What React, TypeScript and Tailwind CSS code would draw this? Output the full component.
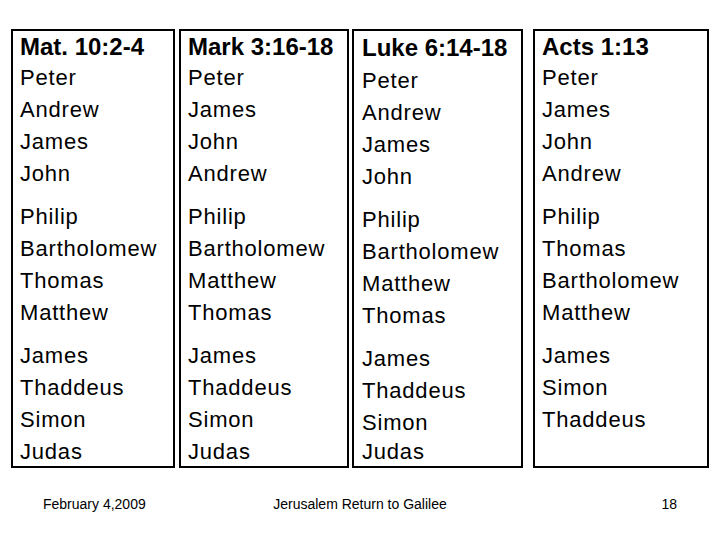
const columns = [
  {
    title: "Mat. 10:2-4",
    groups: [
      ["Peter", "Andrew", "James", "John"],
      ["Philip", "Bartholomew", "Thomas", "Matthew"],
      ["James", "Thaddeus", "Simon", "Judas"],
    ],
    box: "w-[164px]",
    shift: false,
  },
  {
    title: "Mark 3:16-18",
    groups: [
      ["Peter", "James", "John", "Andrew"],
      ["Philip", "Bartholomew", "Matthew", "Thomas"],
      ["James", "Thaddeus", "Simon", "Judas"],
    ],
    box: "ml-[4px] w-[170px]",
    shift: false,
  },
  {
    title: "Luke 6:14-18",
    groups: [
      ["Peter", "Andrew", "James", "John"],
      ["Philip", "Bartholomew", "Matthew", "Thomas"],
      ["James", "Thaddeus", "Simon", "Judas"],
    ],
    box: "ml-[3px] w-[171px] pl-[8px]",
    shift: true,
  },
  {
    title: "Acts 1:13",
    groups: [
      ["Peter", "James", "John", "Andrew"],
      ["Philip", "Thomas", "Bartholomew", "Matthew"],
      ["James", "Simon", "Thaddeus"],
    ],
    box: "ml-[10px] w-[176px]",
    shift: false,
  },
];

export default function App() {
  return (
    <div className="w-[720px] h-[540px] bg-white text-black overflow-hidden font-['Liberation_Sans',Arial,sans-serif]">
      {/* apostle lists */}
      <div className="flex pt-[29px] pl-[11px]">
        {columns.map((col) => (
          <div
            key={col.title}
            className={`h-[439px] border-2 border-black pl-[7px] pt-[1px] ${col.box}`}
          >
            <div
              className={`font-bold text-[24px] ${
                col.shift ? "leading-[31px]" : "leading-[30px]"
              }`}
            >
              {col.title}
            </div>
            {col.groups.map((g, gi) => (
              <div
                key={gi}
                className={`${gi > 0 ? "mt-[11px]" : ""} ${
                  col.shift && gi === 0 ? "mt-[2px]" : ""
                } text-[22px] tracking-[0.8px] leading-[32px]`}
              >
                {g.map((name, ni) => (
                  <div
                    key={ni}
                    className={
                      col.shift && gi === 2 && ni === 3
                        ? "leading-[26px]"
                        : ""
                    }
                  >
                    {name}
                  </div>
                ))}
              </div>
            ))}
          </div>
        ))}
      </div>

      {/* footer */}
      <div className="grid grid-cols-3 px-[43px] mt-[28px] text-[14px] leading-[16px]">
        <div>February 4,2009</div>
        <div className="text-center whitespace-nowrap">Jerusalem Return to Galilee</div>
        <div className="text-right">18</div>
      </div>
    </div>
  );
}
